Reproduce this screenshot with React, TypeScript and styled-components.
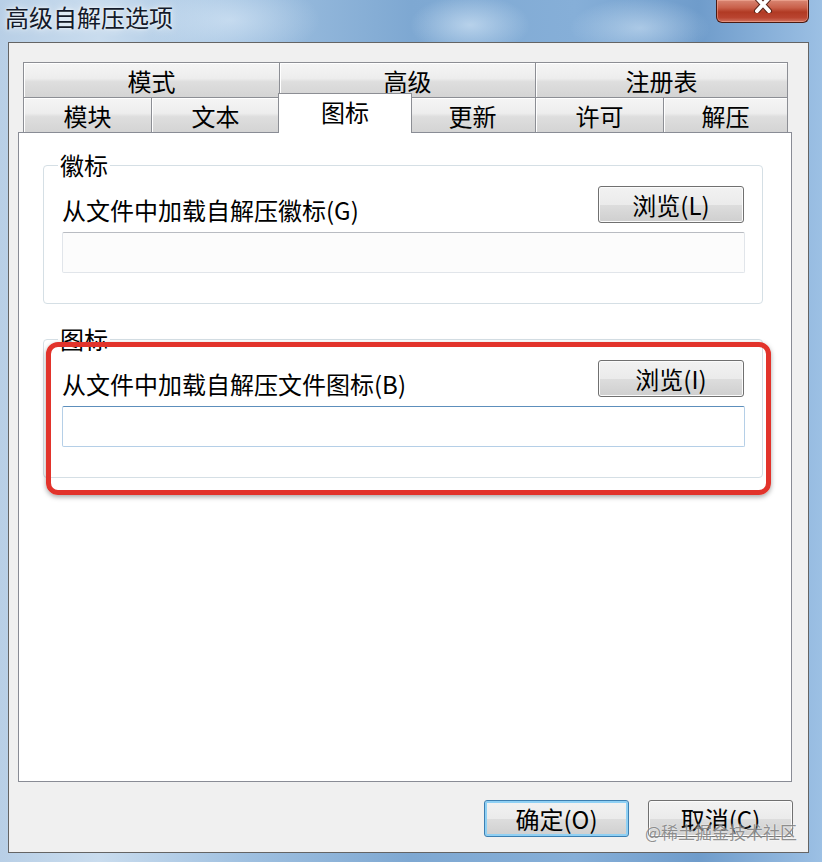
import styled, { createGlobalStyle } from "styled-components";

const GlobalStyle = createGlobalStyle`
  html, body {
    margin: 0;
    padding: 0;
    background: #a9c8e8;
  }
  body {
    font-family: "Noto Sans CJK SC", "Liberation Sans", sans-serif;
  }
`;

const Window = styled.div`
  position: relative;
  width: 822px;
  height: 862px;
  display: flex;
  flex-direction: column;
  overflow: hidden;
  background:
    radial-gradient(ellipse 90px 40px at 230px 20px, rgba(225, 238, 250, 0.55), transparent),
    radial-gradient(ellipse 60px 30px at 470px 25px, rgba(220, 236, 250, 0.6), transparent),
    radial-gradient(ellipse 70px 30px at 640px 28px, rgba(220, 236, 250, 0.5), transparent),
    linear-gradient(90deg, #b8cfe6 0%, #c9dcee 12%, #9fc0e0 30%, #7ea8d2 50%, #86afd8 70%, #6f9ccb 85%, #9cc0e4 100%);
`;

const TitleBar = styled.div`
  height: 42px;
  display: flex;
  align-items: flex-start;
  flex-shrink: 0;
`;

const Title = styled.div`
  padding: 2px 0 0 5px;
  font-size: 24px;
  line-height: 30px;
  color: #141a2a;
  text-shadow: 0 0 8px rgba(255, 255, 255, 0.9), 0 0 3px rgba(255, 255, 255, 0.8);
`;

const CloseButton = styled.div`
  margin-left: auto;
  margin-right: 13px;
  width: 93px;
  height: 23px;
  box-sizing: border-box;
  border: 1px solid #4a1a12;
  border-top: none;
  border-radius: 0 0 6px 6px;
  background: linear-gradient(#d98673 0%, #c9604a 35%, #b13a24 55%, #b94430 80%, #cf7260 100%);
  box-shadow: inset 0 0 0 1px rgba(255, 190, 170, 0.45);
  display: flex;
  justify-content: center;
  align-items: flex-start;
  overflow: hidden;
`;

const Client = styled.div`
  flex: 1;
  margin: 0 13px 9px 8px;
  border: 1px solid #646464;
  background: #f0f0f0;
  padding: 19px 16px 0 9px;
  display: flex;
  flex-direction: column;
  min-height: 0;
`;

const TabStrip = styled.div`
  margin: 0 3px 0 5px;
  display: flex;
  flex-direction: column;
`;

const TabRow = styled.div<{ $cols: string }>`
  display: grid;
  grid-template-columns: ${(p) => p.$cols};
  height: 35px;
`;

const Tab = styled.div<{ $active?: boolean; $first?: boolean }>`
  position: relative;
  box-sizing: border-box;
  border: 1px solid #8c8e94;
  border-bottom: none;
  border-left-width: ${(p) => (p.$first || p.$active ? "1px" : "0")};
  background: linear-gradient(#f5f5f5 0%, #ededed 45%, #dedede 55%, #d4d4d4 100%);
  box-shadow: inset 1px 1px 0 #ffffff;
  display: flex;
  justify-content: center;
  align-items: center;
  padding-top: 2px;
  font-size: 24px;
  line-height: 26px;
  color: #000;

  ${(p) =>
    p.$active &&
    `
    z-index: 1;
    margin: -4px -2px -1px -2px;
    background: #ffffff;
    box-shadow: none;
    align-items: flex-start;
    padding-top: 5px;
  `}
`;

const Panel = styled.div`
  flex: 1;
  background: #ffffff;
  border: 1px solid #898c95;
  padding: 19px 28px 0 24px;
  display: flex;
  flex-direction: column;
`;

const GroupWrap = styled.div<{ $top?: number }>`
  position: relative;
  margin-top: ${(p) => p.$top ?? 0}px;
`;

const Group = styled.fieldset`
  margin: 0;
  padding: 0 17px 30px 18px;
  border: 1px solid #d5dfe5;
  border-radius: 4px;
  box-shadow: inset 1px 1px 0 #ffffff;
`;

const Legend = styled.legend`
  margin-left: -4px;
  padding: 0 2px;
  font-size: 24px;
  line-height: 26px;
  color: #000;
`;

const FieldRow = styled.div`
  margin-top: 8px;
  display: flex;
  justify-content: space-between;
  align-items: flex-start;
`;

const FieldLabel = styled.div`
  padding-top: 11px;
  font-size: 24px;
  line-height: 26px;
  color: #000;
`;

const Button = styled.button<{ $default?: boolean }>`
  width: 146px;
  height: 37px;
  margin: 0;
  margin-right: 1px;
  padding: 0;
  box-sizing: border-box;
  border: 1px solid ${(p) => (p.$default ? "#3c7fb1" : "#707070")};
  border-radius: 3px;
  background: linear-gradient(#f2f2f2 0%, #ebebeb 50%, #dddddd 51%, #cfcfcf 100%);
  box-shadow: inset 0 0 0 ${(p) => (p.$default ? "2px #8fd0f4" : "1px #fbfbfb")};
  font-family: "Noto Sans CJK SC", "Liberation Sans", sans-serif;
  font-size: 24px;
  line-height: 26px;
  color: #000;
`;

const TextBox = styled.div<{ $focus?: boolean }>`
  margin-top: 9px;
  height: 41px;
  box-sizing: border-box;
  border: 1px solid ${(p) => (p.$focus ? "#b5cfe7" : "#e1e5ea")};
  border-top-color: ${(p) => (p.$focus ? "#5d8fbc" : "#b9bcc2")};
  border-radius: 2px;
  background: ${(p) => (p.$focus ? "#ffffff" : "#fcfcfc")};
`;

const Highlight = styled.div`
  position: absolute;
  left: 3px;
  top: 16px;
  width: 725px;
  height: 153px;
  box-sizing: border-box;
  border: 5px solid #e2332b;
  border-radius: 12px;
  box-shadow: 0 2px 5px rgba(0, 0, 0, 0.35);
  pointer-events: none;
`;

const ButtonBar = styled.div`
  flex-shrink: 0;
  margin: 18px -2px 0 0;
  padding-bottom: 15px;
  display: flex;
  justify-content: flex-end;
  gap: 18px;
`;

const DialogButton = styled(Button)`
  width: 145px;
`;

const Watermark = styled.div`
  position: absolute;
  right: 25px;
  bottom: 19px;
  font-size: 17px;
  line-height: 22px;
  color: rgba(110, 110, 110, 0.75);
  text-shadow: 0 0 2px rgba(255, 255, 255, 0.9);
  white-space: nowrap;
  pointer-events: none;
`;

const CloseX = () => (
  <svg width="22" height="16" viewBox="0 0 22 16" style={{ marginTop: -3 }}>
    <path d="M5 1 L17 14 M17 1 L5 14" stroke="#5a2418" strokeWidth="6" strokeLinecap="round" />
    <path d="M5 1 L17 14 M17 1 L5 14" stroke="#ffffff" strokeWidth="4" strokeLinecap="round" />
  </svg>
);

const topTabs = ["模式", "高级", "注册表"];
const bottomTabs = ["模块", "文本", "图标", "更新", "许可", "解压"];

export default function App() {
  return (
    <>
      <GlobalStyle />
      <Window>
        <TitleBar>
          <Title>高级自解压选项</Title>
          <CloseButton>
            <CloseX />
          </CloseButton>
        </TitleBar>
        <Client>
          <TabStrip>
            <TabRow $cols="257px 256px 252px">
              {topTabs.map((t, i) => (
                <Tab key={t} $first={i === 0}>
                  {t}
                </Tab>
              ))}
            </TabRow>
            <TabRow $cols="129px 128px 130px 126px 128px 124px">
              {bottomTabs.map((t, i) => (
                <Tab key={t} $first={i === 0} $active={t === "图标"}>
                  {t}
                </Tab>
              ))}
            </TabRow>
          </TabStrip>
          <Panel>
            <GroupWrap>
              <Group>
                <Legend>徽标</Legend>
                <FieldRow>
                  <FieldLabel>从文件中加载自解压徽标(G)</FieldLabel>
                  <Button>浏览(L)</Button>
                </FieldRow>
                <TextBox />
              </Group>
            </GroupWrap>
            <GroupWrap $top={22}>
              <Group>
                <Legend>图标</Legend>
                <FieldRow>
                  <FieldLabel>从文件中加载自解压文件图标(B)</FieldLabel>
                  <Button>浏览(I)</Button>
                </FieldRow>
                <TextBox $focus />
              </Group>
              <Highlight />
            </GroupWrap>
          </Panel>
          <ButtonBar>
            <DialogButton $default>确定(O)</DialogButton>
            <DialogButton>取消(C)</DialogButton>
          </ButtonBar>
        </Client>
        <Watermark>@稀土掘金技术社区</Watermark>
      </Window>
    </>
  );
}
